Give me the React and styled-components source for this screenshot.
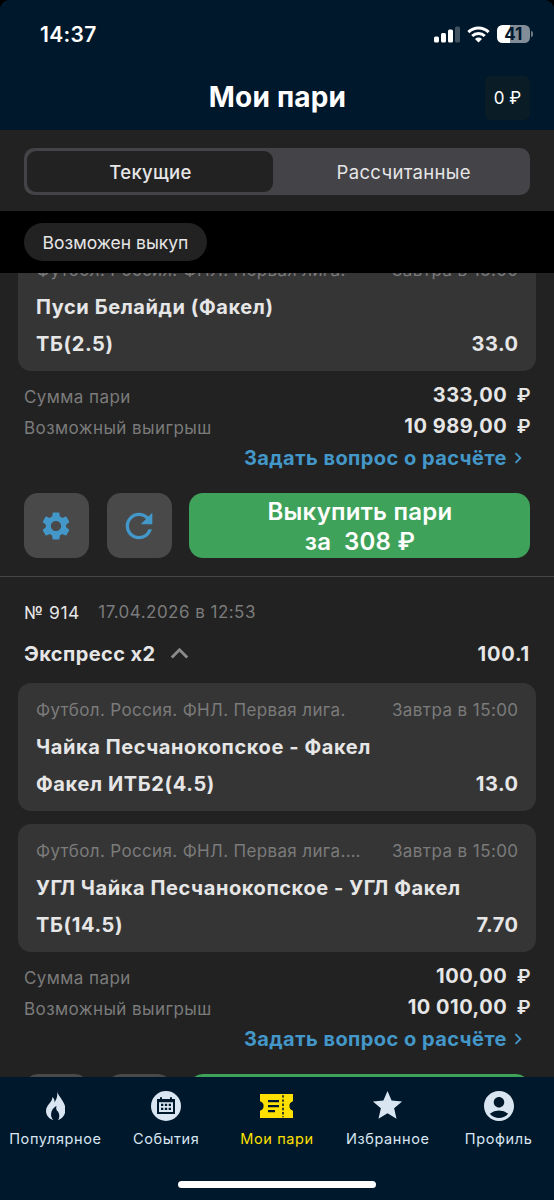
import React from "react";
import styled, { createGlobalStyle } from "styled-components";
import {
  MdAccountCircle,
  MdChevronRight,
  MdExpandLess,
  MdRefresh,
  MdSettings,
  MdStar,
} from "react-icons/md";

const color = {
  navy: "#00182b",
  page: "#222222",
  card: "#353535",
  text: "#e6e6e6",
  muted: "#7b7b7b",
  link: "#4397c9",
  button: "#494949",
  green: "#3fa25a",
  line: "#464646",
  nav: "#d9e6f2",
  active: "#ffe000",
};

const GlobalStyle = createGlobalStyle`
  * { box-sizing: border-box; }
  body { margin: 0; background: #000; }
  button { font: inherit; color: inherit; border: 0; padding: 0; background: none; letter-spacing: inherit; }
  svg { display: block; flex: none; }
`;

const Screen = styled.div`
  display: flex;
  flex-direction: column;
  width: 554px;
  height: 1200px;
  overflow: hidden;
  background: ${color.page};
  color: ${color.text};
  font-family: Inter, "Noto Sans", sans-serif;
  white-space: pre;
`;

const TopWrap = styled.div`
  flex: none;
  background: #000;
`;

const Top = styled.header`
  height: 130px;
  border-radius: 9px 9px 0 0;
  background: ${color.navy};
  color: #fff;
`;

const StatusBar = styled.div`
  display: flex;
  justify-content: space-between;
  align-items: center;
  height: 68px;
  padding: 0 21px 0 40px;
`;

const Clock = styled.div`
  font-size: 21px;
  font-weight: 600;
  letter-spacing: 0.35px;
`;

const StatusIcons = styled.div`
  display: flex;
  align-items: center;
  gap: 7px;
`;

const Battery = styled.div`
  display: flex;
  align-items: center;
  gap: 1.5px;
`;

const BatteryBody = styled.div`
  width: 32.5px;
  height: 18px;
  border-radius: 5.5px;
  background: linear-gradient(to right, #fff 40%, #828d97 40%);
  color: ${color.navy};
  font-size: 17px;
  font-weight: 700;
  line-height: 18px;
  text-align: center;
`;

const BatteryCap = styled.div`
  width: 2px;
  height: 6px;
  border-radius: 0 2px 2px 0;
  background: #6e7a86;
`;

const TitleBar = styled.div`
  display: grid;
  grid-template-columns: 1fr auto 1fr;
  align-items: center;
  height: 58px;
  padding: 0 24px;
`;

const Title = styled.h1`
  grid-column: 2;
  margin: 0;
  padding-left: 1px;
  font-size: 28px;
  line-height: 34px;
  font-weight: 700;
  letter-spacing: 0.2px;
`;

const Balance = styled.div`
  justify-self: end;
  width: 45px;
  height: 44px;
  margin-top: 2px;
  border-radius: 6px;
  background: #0a1c25;
  font-size: 17px;
  line-height: 44px;
  text-align: center;
`;

const TabsArea = styled.div`
  flex: none;
  height: 81px;
  padding: 18px 24px 0;
`;

const Tabs = styled.div`
  display: grid;
  grid-template-columns: 246.5px 1fr;
  gap: 3px;
  height: 47px;
  padding: 3px 0 3px 2.5px;
  border-radius: 10px;
  background: #444347;
`;

const Tab = styled.button`
  padding-left: 1.5px;
  border-radius: 9px;
  background: ${(p) => (p.$active ? color.page : "transparent")};
  font-size: 18.5px;
  font-weight: ${(p) => (p.$active ? 500 : 400)};
  letter-spacing: 0.32px;
`;

const FilterBar = styled.div`
  display: flex;
  align-items: center;
  flex: none;
  height: 62px;
  padding: 0 24px;
  background: #000;
`;

const Chip = styled.button`
  width: 183px;
  height: 38px;
  border-radius: 19px;
  background: ${color.page};
  font-size: 17.5px;
`;

const Feed = styled.main`
  flex: 1;
  min-height: 0;
  overflow: hidden;
`;

/* A scrolled bet keeps its lower part visible under the filter bar. */
const BetFrame = styled.section`
  display: flex;
  flex-direction: column;
  justify-content: flex-end;
  height: ${(p) => (p.$scrolled ? "304px" : "auto")};
  border-bottom: 1px solid ${color.line};

  > * {
    flex: none;
  }
`;

const BetHead = styled.div`
  padding: 20.3px 24px 3px;
`;

const HeadRow = styled.div`
  display: flex;
  align-items: center;
  height: ${(p) => p.$h}px;
`;

const BetNumber = styled.span`
  margin-right: 18.5px;
  font-size: 17.5px;
  letter-spacing: 0.5px;
`;

const BetDate = styled.span`
  color: ${color.muted};
  font-size: 17px;
  letter-spacing: 0.47px;
`;

const Strong = styled.span`
  font-size: 20px;
  font-weight: 700;
  letter-spacing: ${(p) => p.$ls ?? 0.5}px;
`;

const Toggle = styled.span`
  flex: 1;
  margin-left: 7px;
  color: #8a8a8a;
`;

const Cards = styled.div`
  display: flex;
  flex-direction: column;
  gap: 12.5px;
  padding: 0 18px;
`;

const Card = styled.article`
  height: 128px;
  padding: 8.3px 17.5px 8px 18px;
  border-radius: 13px;
  background: ${color.card};
`;

const CardRow = styled.div`
  display: flex;
  align-items: center;
  justify-content: space-between;
  height: 37px;
`;

const Muted = styled.span`
  color: ${color.muted};
  font-size: 17px;
  letter-spacing: ${(p) => p.$ls ?? 0.42}px;
`;

const Summary = styled.div`
  padding: 9px 24px 0;
`;

const SumRow = styled.div`
  display: flex;
  justify-content: space-between;
  height: 31px;
  line-height: 31px;
`;

const SumLabel = styled(Muted)`
  padding-top: 2px;
`;

const Currency = styled.span`
  margin: 0 -1px 0 9.5px;
  font-size: 19px;
  font-weight: 600;
`;

const Ask = styled.a`
  display: flex;
  align-items: center;
  justify-content: flex-end;
  height: 31px;
  padding: 1px 1px 0 0;
  color: ${color.link};
  font-size: 20px;
  font-weight: 700;
  letter-spacing: 0.45px;
`;

const Actions = styled.div`
  display: grid;
  grid-template-columns: 65px 65px 1fr;
  gap: 17.5px;
  height: 103px;
  padding: 20px 24px 18px;
`;

const IconButton = styled.button`
  display: flex;
  align-items: center;
  justify-content: center;
  padding-top: 1px;
  padding-right: ${(p) => p.$nudge ?? 0}px;
  border-radius: 14px;
  background: ${color.button};
  color: ${color.link};
`;

const CashOut = styled.button`
  padding: 2px 0 0 1px;
  border-radius: 14px;
  background: ${color.green};
  color: #fff;
  font-size: 24px;
  font-weight: 600;
  line-height: 29.5px;
  letter-spacing: 0.25px;
`;

const BottomNav = styled.nav`
  flex: none;
  height: 123px;
  background: ${color.navy};
`;

const NavItems = styled.div`
  display: grid;
  grid-template-columns: repeat(5, 1fr);
  height: 104px;
  padding-top: 10px;
`;

const NavItem = styled.div`
  display: flex;
  flex-direction: column;
  align-items: center;
  color: ${(p) => (p.$active ? color.active : color.nav)};
`;

const NavIcon = styled.div`
  display: flex;
  align-items: center;
  justify-content: center;
  height: 37px;
  margin-bottom: 5px;
`;

const NavLabel = styled.span`
  font-size: 14.5px;
  line-height: 20px;
  letter-spacing: 0.62px;
`;

const HomeIndicator = styled.div`
  width: 198px;
  height: 7px;
  margin: 0 auto;
  border-radius: 4px;
  background: #fff;
`;

const Signal = () => (
  <svg width="26" height="17" viewBox="0 0 26 17" fill="#fff">
    <rect x="0" y="10.5" width="5" height="6" rx="1.5" />
    <rect x="7" y="7" width="5" height="9.5" rx="1.5" />
    <rect x="14" y="3.5" width="5" height="13" rx="1.5" />
    <rect x="21" y="0.5" width="5" height="16" rx="1.5" opacity="0.25" />
  </svg>
);

const Wifi = () => (
  <svg width="23" height="17" viewBox="0 0 23 17">
    <g fill="none" stroke="#fff" strokeWidth="3">
      <path d="M1.4 6.1a14.4 14.4 0 0 1 20.2 0" />
      <path d="M5.2 10a9 9 0 0 1 12.6 0" />
    </g>
    <path d="M8 12.9a5.1 5.1 0 0 1 7 0L11.5 16.4z" fill="#fff" />
  </svg>
);

const Flame = () => (
  <svg width="19.5" height="29.5" viewBox="0 0 58 88" fill="currentColor">
    <path d="M33 0C35 16 58 30 58 56C58 71 49 83 36 87C42 76 40 67 34 60C30 56 30 50 31 44C22 50 15 58 15 70C15 77 18 83 22 87C8 83 0 72 0 60C0 40 19 36 19 18C24 22 26 27 25 34C33 24 35 12 33 0Z" />
  </svg>
);

const CalendarBadge = () => (
  <svg width="30" height="30" viewBox="0 0 90 90">
    <circle cx="45" cy="45" r="45" fill="currentColor" />
    <path
      fill={color.navy}
      fillRule="evenodd"
      d="M27 19h6v5h24v-5h6v5h9v45H18V24h9zM24 34v29h42V34z"
    />
    <path
      fill={color.navy}
      d="M30 38h7v7h-7zM41.500 38h7v7h-7zM53 38h7v7h-7zM30 50h7v7h-7zM41.500 50h7v7h-7zM53 50h7v7h-7z"
    />
  </svg>
);

const Ticket = () => (
  <svg width="33" height="24" viewBox="0 0 33 24">
    <path
      fill="currentColor"
      d="M0 0h33v7.200a5 5 0 0 0 0 9.600V24H0v-7.200a5 5 0 0 0 0-9.600z"
    />
    <path
      fill="none"
      stroke={color.navy}
      strokeWidth="2.200"
      d="M8 7.200h11M8 12.200h11M8 17.200h7"
    />
    <path
      fill="none"
      stroke={color.navy}
      strokeWidth="1.600"
      strokeDasharray="2.400 1.800"
      d="M23 1.200v22"
    />
  </svg>
);

const Leg = ({ league, when, event, pick, odds }) => (
  <Card>
    <CardRow>
      <Muted $ls={0.35}>{league}</Muted>
      <Muted>{when}</Muted>
    </CardRow>
    <CardRow>
      <Strong $ls={0.58}>{event}</Strong>
    </CardRow>
    <CardRow>
      <Strong $ls={0.62}>{pick}</Strong>
      <Strong>{odds}</Strong>
    </CardRow>
  </Card>
);

const Totals = ({ stake, win }) => (
  <Summary>
    <SumRow>
      <SumLabel>Сумма пари</SumLabel>
      <Strong>
        {stake}
        <Currency>₽</Currency>
      </Strong>
    </SumRow>
    <SumRow>
      <SumLabel>Возможный выигрыш</SumLabel>
      <Strong>
        {win}
        <Currency>₽</Currency>
      </Strong>
    </SumRow>
    <Ask>
      Задать вопрос о расчёте
      <MdChevronRight size={22} />
    </Ask>
  </Summary>
);

const BetActions = ({ label }) => (
  <Actions>
    <IconButton aria-label="Настройки" $nudge={1}>
      <MdSettings size={34} />
    </IconButton>
    <IconButton aria-label="Обновить">
      <MdRefresh size={40} />
    </IconButton>
    <CashOut>{label}</CashOut>
  </Actions>
);

export default function App() {
  return (
    <Screen>
      <GlobalStyle />
      <TopWrap>
        <Top>
          <StatusBar>
            <Clock>14:37</Clock>
            <StatusIcons>
              <Signal />
              <Wifi />
              <Battery>
                <BatteryBody>41</BatteryBody>
                <BatteryCap />
              </Battery>
            </StatusIcons>
          </StatusBar>
          <TitleBar>
            <Title>Мои пари</Title>
            <Balance>0 ₽</Balance>
          </TitleBar>
        </Top>
      </TopWrap>
      <TabsArea>
        <Tabs>
          <Tab $active>Текущие</Tab>
          <Tab>Рассчитанные</Tab>
        </Tabs>
      </TabsArea>
      <FilterBar>
        <Chip>Возможен выкуп</Chip>
      </FilterBar>
      <Feed>
        <BetFrame $scrolled>
          <Cards>
            <Leg
              league="Футбол. Россия. ФНЛ. Первая лига."
              when="Завтра в 15:00"
              event="Пуси Белайди (Факел)"
              pick="ТБ(2.5)"
              odds="33.0"
            />
          </Cards>
          <Totals stake="333,00" win="10 989,00" />
          <BetActions label={"Выкупить пари\nза  308 ₽"} />
        </BetFrame>
        <BetFrame>
          <BetHead>
            <HeadRow $h={30}>
              <BetNumber>№ 914</BetNumber>
              <BetDate>17.04.2026 в 12:53</BetDate>
            </HeadRow>
            <HeadRow $h={53}>
              <Strong $ls={0.4}>Экспресс x2</Strong>
              <Toggle>
                <MdExpandLess size={35} />
              </Toggle>
              <Strong $ls={0.8}>100.1</Strong>
            </HeadRow>
          </BetHead>
          <Cards>
            <Leg
              league="Футбол. Россия. ФНЛ. Первая лига."
              when="Завтра в 15:00"
              event="Чайка Песчанокопское - Факел"
              pick="Факел ИТБ2(4.5)"
              odds="13.0"
            />
            <Leg
              league="Футбол. Россия. ФНЛ. Первая лига.…"
              when="Завтра в 15:00"
              event="УГЛ Чайка Песчанокопское - УГЛ Факел"
              pick="ТБ(14.5)"
              odds="7.70"
            />
          </Cards>
          <Totals stake="100,00" win="10 010,00" />
          <BetActions />
        </BetFrame>
      </Feed>
      <BottomNav>
        <NavItems>
          <NavItem>
            <NavIcon>
              <Flame />
            </NavIcon>
            <NavLabel>Популярное</NavLabel>
          </NavItem>
          <NavItem>
            <NavIcon>
              <CalendarBadge />
            </NavIcon>
            <NavLabel>События</NavLabel>
          </NavItem>
          <NavItem $active>
            <NavIcon>
              <Ticket />
            </NavIcon>
            <NavLabel>Мои пари</NavLabel>
          </NavItem>
          <NavItem>
            <NavIcon>
              <MdStar size={35} />
            </NavIcon>
            <NavLabel>Избранное</NavLabel>
          </NavItem>
          <NavItem>
            <NavIcon>
              <MdAccountCircle size={36} />
            </NavIcon>
            <NavLabel>Профиль</NavLabel>
          </NavItem>
        </NavItems>
        <HomeIndicator />
      </BottomNav>
    </Screen>
  );
}
